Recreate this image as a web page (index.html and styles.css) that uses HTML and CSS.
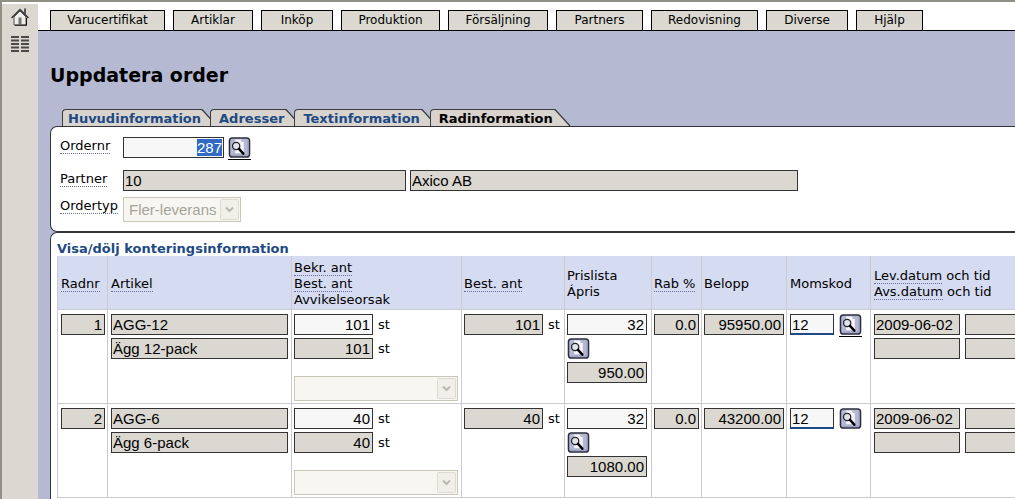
FILE: index.html
```html
<!DOCTYPE html>
<html lang="sv">
<head>
<meta charset="utf-8">
<title>Uppdatera order</title>
<link rel="stylesheet" href="styles.css">
</head>
<body>
<svg class="defs" aria-hidden="true">
  <symbol id="lens" viewBox="0 0 23 22">
    <rect x="1" y="1" width="21" height="20" rx="3" fill="#b4b8d2" stroke="#2c2e40" stroke-width="1.600"/>
    <path d="M20.500 3v16h-17" fill="none" stroke="#9498b4"/>
    <path d="M7 2.500h7l2 2V17H7z" fill="#f5f5fb"/>
    <path d="M14 2.500v2h2" fill="none" stroke="#9ea1b8"/>
    <circle cx="8" cy="9.500" r="3.800" fill="#dfe2ef" stroke="#222" stroke-width="1.300"/>
    <path d="M11 12.500l4.500 5" stroke="#000" stroke-width="2.600" stroke-linecap="round"/>
  </symbol>
  <symbol id="drop" viewBox="0 0 19 21">
    <rect x=".5" y=".5" width="18" height="20" rx="1" fill="#f0efe8" stroke="#dddbd0"/>
    <path d="M6 8.500l3.500 3.500 3.500-3.500" fill="none" stroke="#b9b8ae" stroke-width="2"/>
  </symbol>
  <symbol id="slant" viewBox="0 0 17 17">
    <path d="M0 0L1 0L16 17H0z" fill="#d9d3cd"/>
    <path d="M0 .5H1L16 17" fill="none" stroke="#3c3c40" stroke-width="1.300"/>
  </symbol>
</svg>
<div class="app">
  <aside class="rail">
    <a href="#" aria-label="Hem"><svg class="home" viewBox="0 0 18 18"><path d="M3 9v8h12V9L9 3z" fill="#eeeeec" stroke="#555"/><path d="M.5 10L9 1.500 17.500 10" fill="none" stroke="#333" stroke-width="1.500"/><path d="M13 .5v4.500l2 2V.5z" fill="#555"/><path d="M7.500 9.500h3v7h-3z" fill="#777"/><path d="M4 17.200h12M15.500 10v7" stroke="#111"/></svg></a>
    <a href="#" aria-label="Lista"><svg class="list" viewBox="0 0 18 18"><path d="M0 2h8M10 2h8M0 5.500h8M10 5.500h8M0 9h8M10 9h8M0 12.500h8M10 12.500h8M0 16h8M10 16h8" stroke="#4a4a4a" stroke-width="2"/></svg></a>
  </aside>
  <div class="main">
    <nav class="menu">
      <button>Varucertifikat</button><button>Artiklar</button><button>Inköp</button><button>Produktion</button><button>Försäljning</button><button>Partners</button><button>Redovisning</button><button>Diverse</button><button>Hjälp</button>
    </nav>
    <main class="page">
      <h1>Uppdatera order</h1>
      <nav class="tabs">
        <a href="#" class="tab"><span>Huvudinformation</span><svg><use href="#slant"/></svg></a>
        <a href="#" class="tab"><span>Adresser</span><svg><use href="#slant"/></svg></a>
        <a href="#" class="tab"><span>Textinformation</span><svg><use href="#slant"/></svg></a>
        <a href="#" class="tab current"><span>Radinformation</span><svg><use href="#slant"/></svg></a>
      </nav>
      <section class="panel form">
        <div class="line first">
          <label for="ordernr"><span class="hint">Ordernr</span></label>
          <input id="ordernr" class="num edit order" value="287">
          <button class="lens marked" aria-label="Sök order"><svg><use href="#lens"/></svg></button>
        </div>
        <div class="line second">
          <label for="partner"><span class="hint">Partner</span></label>
          <input id="partner" class="code" value="10" readonly>
          <input class="name" value="Axico AB" aria-label="Partnernamn" readonly>
        </div>
        <div class="line">
          <label for="typ"><span class="hint">Ordertyp</span></label>
          <span class="pick type"><select id="typ" disabled><option>Fler-leverans</option></select><svg><use href="#drop"/></svg></span>
        </div>
      </section>
      <section class="panel rows">
        <a href="#" class="toggle">Visa/dölj konteringsinformation</a>
        <table>
          <colgroup><col class="c1"><col class="c2"><col class="c3"><col class="c4"><col class="c5"><col class="c6"><col class="c7"><col class="c8"><col class="c9"></colgroup>
          <thead>
            <tr>
              <th><span class="hint">Radnr</span></th>
              <th><span class="hint">Artikel</span></th>
              <th class="tight"><span class="hint">Bekr. ant</span><br><span class="hint">Best. ant</span><br><span class="plain">Avvikelseorsak</span></th>
              <th class="tight"><span class="hint">Best. ant</span></th>
              <th class="tight"><span class="plain">Prislista</span><br><span class="plain">Ápris</span></th>
              <th class="tight"><span class="hint">Rab %</span></th>
              <th class="tight"><span class="plain">Belopp</span></th>
              <th><span class="plain">Momskod</span></th>
              <th><span class="hint">Lev.datum</span> och tid<br><span class="hint">Avs.datum</span> och tid</th>
            </tr>
          </thead>
          <tbody>
            <tr>
              <td><input class="num nr" value="1" aria-label="Radnr" readonly></td>
              <td><div class="stack"><input class="art" value="AGG-12" aria-label="Artikel" readonly><input class="art" value="Ägg 12-pack" aria-label="Benämning" readonly></div></td>
              <td class="tight"><div class="stack"><label class="qty"><input class="num edit" value="101">st</label><label class="qty"><input class="num" value="101" readonly>st</label><span class="pick reason"><select disabled aria-label="Avvikelseorsak"><option></option></select><svg><use href="#drop"/></svg></span></div></td>
              <td class="tight"><label class="qty"><input class="num" value="101" readonly>st</label></td>
              <td class="tight"><div class="stack"><input class="num edit price" value="32" aria-label="Prislista"><button class="lens" aria-label="Sök prislista"><svg><use href="#lens"/></svg></button><input class="num price" value="950.00" aria-label="Ápris" readonly></div></td>
              <td class="tight"><input class="num rab" value="0.0" aria-label="Rab %" readonly></td>
              <td class="tight"><input class="num price" value="95950.00" aria-label="Belopp" readonly></td>
              <td><div class="vat"><input class="edit" value="12" aria-label="Momskod"><button class="lens marked" aria-label="Sök momskod"><svg><use href="#lens"/></svg></button></div></td>
              <td><div class="dates"><input value="2009-06-02" aria-label="Lev.datum" readonly><input aria-label="Lev.tid" readonly><input aria-label="Avs.datum" readonly><input aria-label="Avs.tid" readonly></div></td>
            </tr>
            <tr>
              <td><input class="num nr" value="2" aria-label="Radnr" readonly></td>
              <td><div class="stack"><input class="art" value="AGG-6" aria-label="Artikel" readonly><input class="art" value="Ägg 6-pack" aria-label="Benämning" readonly></div></td>
              <td class="tight"><div class="stack"><label class="qty"><input class="num edit" value="40">st</label><label class="qty"><input class="num" value="40" readonly>st</label><span class="pick reason"><select disabled aria-label="Avvikelseorsak"><option></option></select><svg><use href="#drop"/></svg></span></div></td>
              <td class="tight"><label class="qty"><input class="num" value="40" readonly>st</label></td>
              <td class="tight"><div class="stack"><input class="num edit price" value="32" aria-label="Prislista"><button class="lens" aria-label="Sök prislista"><svg><use href="#lens"/></svg></button><input class="num price" value="1080.00" aria-label="Ápris" readonly></div></td>
              <td class="tight"><input class="num rab" value="0.0" aria-label="Rab %" readonly></td>
              <td class="tight"><input class="num price" value="43200.00" aria-label="Belopp" readonly></td>
              <td><div class="vat"><input class="edit" value="12" aria-label="Momskod"><button class="lens" aria-label="Sök momskod"><svg><use href="#lens"/></svg></button></div></td>
              <td><div class="dates"><input value="2009-06-02" aria-label="Lev.datum" readonly><input aria-label="Lev.tid" readonly><input aria-label="Avs.datum" readonly><input aria-label="Avs.tid" readonly></div></td>
            </tr>
          </tbody>
        </table>
      </section>
    </main>
  </div>
</div>
<script src="main.js"></script>
</body>
</html>
```
FILE: styles.css
```css
* { box-sizing: border-box; }
html, body { height: 100%; }
body {
  margin: 0;
  overflow: hidden;
  background: #fff;
  color: #000;
  font: 13px/15px "DejaVu Sans", Verdana, sans-serif;
}
.defs { position: absolute; width: 0; height: 0; }
.app {
  display: flex;
  min-height: 100%;
  border-top: 2px solid #8f8f84;
  border-left: 2px solid #8f8f84;
}
.rail {
  flex: none;
  width: 36px;
  margin-top: 2px;
  padding-top: 4px;
  background: #dad8d1;
  display: flex;
  flex-direction: column;
  align-items: center;
  gap: 9px;
}
.rail a { display: block; }
.rail svg { display: block; width: 18px; height: 18px; }
.main { flex: 1; min-width: 0; display: flex; flex-direction: column; }

.menu {
  display: grid;
  grid-template-columns: 115px 80px 72px 99px 100px 87px 107px 82px 67px;
  gap: 8px;
  padding: 8px 0 0 12px;
  border-bottom: 1px solid #000;
}
.menu button {
  height: 20px;
  padding: 0;
  border: 1px solid #000;
  border-bottom: 0;
  background: #dad8d1;
  color: #000;
  font: 12px/19px "DejaVu Sans", Verdana, sans-serif;
}

.page { flex: 1; padding: 32px 0 0 12px; background: #b5b9d2; overflow: hidden; }
h1 { margin: 0 0 22px; font-size: 19px; line-height: 24px; }

.tabs { display: flex; padding-left: 12px; }
.tab { display: flex; height: 17px; margin-right: -8px; color: #1d4a85; font-weight: bold; text-decoration: none; }
.tab span {
  padding: 0 1px 0 8px;
  line-height: 18px;
  background: #d9d3cd;
  border: 1px solid #3c3c40;
  border-width: 1px 0 0 1px;
  border-radius: 4px 0 0 0;
}
.tab:first-child span { padding: 0 0 0 5px; }
.tab svg { width: 17px; height: 17px; }
.tab.current { color: #000; }

.panel { background: #fff; border: 1px solid #333338; border-right: 0; }
.form { padding: 10px 0 9px 9px; border-radius: 7px 0 0 7px; }
.line { display: flex; align-items: flex-start; gap: 4px; }
.line label { width: 59px; padding-top: 1px; }
.first { margin-bottom: 9px; }
.second { margin-bottom: 6px; }
.hint { display: inline-block; border-bottom: 1px dotted #6b6f9a; }
.plain { display: inline-block; border-bottom: 1px solid transparent; }

input {
  display: block;
  height: 21px;
  padding: 0 2px 0 1px;
  border: 1px solid #333;
  border-radius: 0;
  background: #dad8d1;
  color: #000;
  outline: 0;
  font: 15px/19px "Liberation Sans", Arial, sans-serif;
}
input::selection { background: #316ac5; color: #fff; }
.edit { background: #f8f7f7; }
.num { text-align: right; }
.order { width: 101px; padding-right: 1px; }
.code { width: 283px; }
.name { width: 388px; }
.lens { display: block; width: 23px; height: 21px; padding: 0; border: 0; background: none; }
.lens svg { display: block; width: 23px; height: 21px; }
.marked { height: 23px; padding-bottom: 1px; border-bottom: 1px solid #000; }

.pick { display: grid; color: #a5a499; }
.pick > * { grid-area: 1 / 1; }
.pick select {
  height: 25px;
  padding: 0 5px;
  appearance: none;
  border: 1px solid #c9c7b8;
  border-radius: 0;
  background: #f7f6f1;
  color: #a5a499;
  opacity: 1;
  font: 15px/22px "Liberation Sans", Arial, sans-serif;
}
.pick svg { width: 19px; height: 21px; place-self: center end; margin-right: 2px; }
.type { width: 118px; }
.reason { width: 164px; margin-top: 14px; }

.first { min-height: 24px; }
.rows { padding: 8px 0 20px 6px; border-radius: 7px 0 0 0; }
.toggle { display: block; line-height: 15px; color: #1d4a85; font-weight: bold; text-decoration: none; }
table { width: 1100px; table-layout: fixed; border-collapse: separate; border-spacing: 0; border-left: 1px solid #cacad0; }
.c1 { width: 50px; }
.c2 { width: 184px; }
.c3 { width: 170px; }
.c4 { width: 103px; }
.c5 { width: 87px; }
.c6 { width: 50px; }
.c7 { width: 85px; }
.c8 { width: 84px; }
th, td { border: 1px solid #cacad0; border-width: 0 1px 1px 0; text-align: left; }
th { height: 54px; padding: 2px 0 0 3px; background: #d5dbf1; font-weight: normal; white-space: nowrap; }
td { height: 94px; padding: 4px 0 0 3px; vertical-align: top; }
.tight { padding-left: 2px; }
.stack { display: flex; flex-direction: column; align-items: flex-start; gap: 3px; }
.nr { width: 44px; }
.art { width: 177px; }
.qty { display: flex; align-items: center; gap: 5px; }
.qty input { width: 79px; }
.price { width: 80px; }
.rab { width: 45px; }
.vat { display: flex; gap: 5px; }
.vat input { width: 44px; border-bottom: 2px solid #1d4a85; }
.dates { display: grid; grid-template-columns: 86px 86px; gap: 3px 5px; }
.dates input { width: 100%; }
```
FILE: main.js
```js
const order = document.getElementById("ordernr");
order.focus();
order.select();
```
